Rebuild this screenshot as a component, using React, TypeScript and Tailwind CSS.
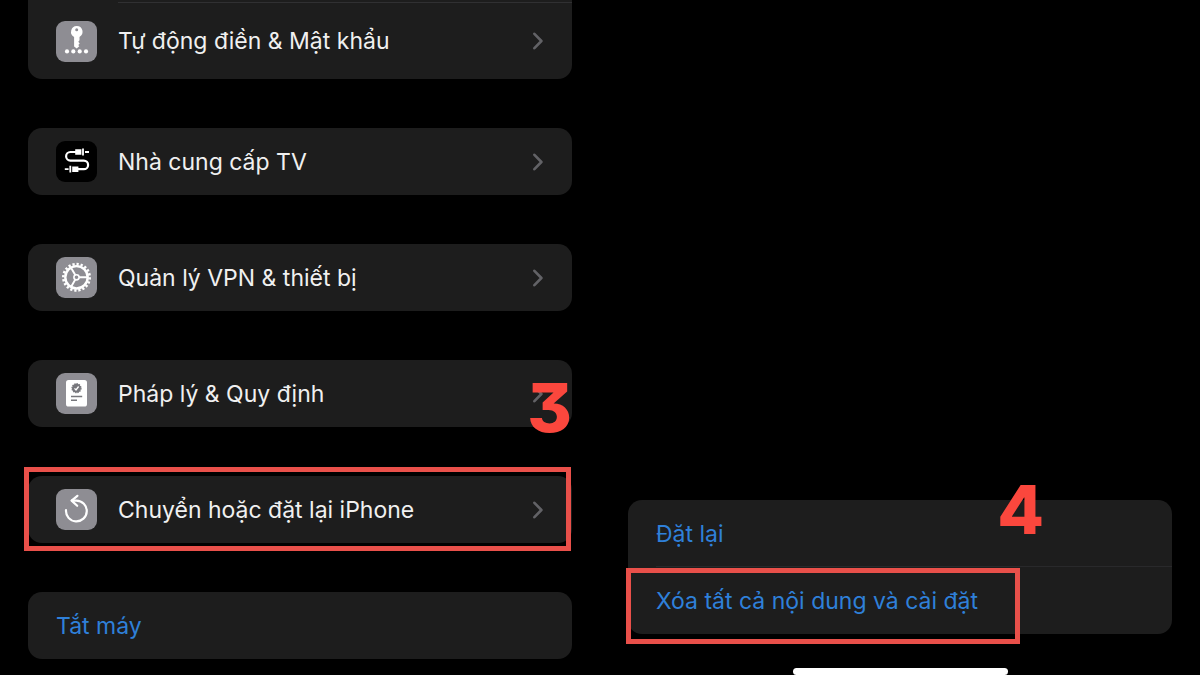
import type { ReactNode } from 'react'

function KeyIcon() {
    return (
        <svg viewBox="0 0 41 41" className="h-full w-full" fill="white" aria-hidden="true">
            <path
                fillRule="evenodd"
                d="M20.7 5a5.8 5.8 0 0 1 2.8 10.9v3.3l-1.2 1.6 1.4 1.6-1.4 1.7 1 1.2-2.6 2.2-2.6-2V15.9A5.8 5.8 0 0 1 20.7 5Zm0 2.3a1.5 1.5 0 1 0 0 3 1.5 1.5 0 0 0 0-3Z"
            />
            <circle cx="11" cy="30.4" r="2.1" />
            <circle cx="17.3" cy="30.4" r="2.1" />
            <circle cx="23.7" cy="30.4" r="2.1" />
            <circle cx="30" cy="30.4" r="2.1" />
        </svg>
    )
}

function CableIcon() {
    return (
        <svg viewBox="0 0 41 41" className="h-full w-full" fill="none" stroke="white" strokeWidth="2.2" aria-hidden="true">
            <path d="M20 11h-5.6a4.3 4.3 0 0 0 0 8.6h13.4a4.3 4.3 0 0 1 0 8.6H22" />
            <path d="M27 7.6v6.8M29 11h4M14.3 24.8v6.8M8.8 28.2h3.8" strokeWidth="1.8" />
            <path d="M19.2 8.2h6.2v5.6h-6.2ZM16.2 25.4h6.2V31h-6.2Z" fill="white" stroke="none" />
        </svg>
    )
}

function GearIcon() {
    return (
        <svg viewBox="0 0 41 41" className="h-full w-full" fill="none" stroke="white" aria-hidden="true">
            <circle cx="20.5" cy="20.3" r="13.2" strokeWidth="2.6" pathLength="40" strokeDasharray="1.1 0.9" />
            <circle cx="20.5" cy="20.3" r="11.2" strokeWidth="2.4" />
            <circle cx="20.5" cy="20.3" r="2.6" strokeWidth="1.6" />
            <path d="M23 20.3h8.5M19.3 18.1 15 10.7M19.3 22.5 15 29.9" strokeWidth="1.9" />
        </svg>
    )
}

function DocumentIcon() {
    return (
        <svg viewBox="0 0 41 41" className="h-full w-full" fill="none" aria-hidden="true">
            <rect x="10" y="7" width="21" height="26.5" rx="2.6" fill="white" />
            <circle cx="20.5" cy="15.2" r="4.4" fill="#77777c" />
            <circle cx="20.5" cy="15.2" r="4.4" stroke="#77777c" strokeWidth="1.4" pathLength="24" strokeDasharray="1.2 0.8" />
            <path d="m18.5 15.4 1.5 1.6 2.6-3.5" stroke="white" strokeWidth="1.3" />
            <path d="M15 23.5h11.2M15 27.3h6" stroke="#77777c" strokeWidth="1.5" />
        </svg>
    )
}

function ResetIcon() {
    return (
        <svg
            viewBox="0 0 41 41"
            className="h-full w-full"
            fill="none"
            stroke="white"
            strokeWidth="2.2"
            strokeLinecap="round"
            strokeLinejoin="round"
            aria-hidden="true"
        >
            <path d="M10 21.2a10.4 10.4 0 1 0 10.4-9.6h-4.6" />
            <path d="m21.4 6.8-5.8 4.8 5.6 5.2" />
        </svg>
    )
}

function Chevron() {
    return (
        <svg
            viewBox="0 0 12 18"
            className="ml-auto h-[18px] w-3 shrink-0"
            fill="none"
            stroke="#626266"
            strokeWidth="2.6"
            strokeLinecap="round"
            strokeLinejoin="round"
            aria-hidden="true"
        >
            <path d="m2.4 1.8 7 7.2-7 7.2" />
        </svg>
    )
}

type RowProps = {
    label: string
    icon: ReactNode
    dark?: boolean
}

function Row({ label, icon, dark }: RowProps) {
    return (
        <a href="#" className="flex h-[67px] items-center gap-[21px] rounded-[14px] bg-[#1d1d1d] px-7">
            <span className={`h-[41px] w-[41px] shrink-0 rounded-[9px] ${dark ? 'bg-black' : 'bg-[#8e8d93]'}`}>
                {icon}
            </span>
            <span className="pt-0.5 text-[23px] leading-[33px] text-[#f0f0f0]">{label}</span>
            <Chevron />
        </a>
    )
}

export default function App() {
    return (
        <main className="flex min-h-screen bg-black font-['Inter','Noto_Sans',sans-serif]">
            <section className="flex flex-1 flex-col gap-[49px] px-7">
                <div className="rounded-b-[14px] bg-[#1d1d1d] pt-0.5">
                    <div className="ml-[90px] h-px bg-[#303032]"></div>
                    <a href="#" className="flex h-[76px] items-center gap-[21px] px-7">
                        <span className="h-[41px] w-[41px] shrink-0 rounded-[9px] bg-[#8e8d93]">
                            <KeyIcon />
                        </span>
                        <span className="text-[23px] leading-[33px] text-[#f0f0f0]">Tự động điền &amp; Mật khẩu</span>
                        <Chevron />
                    </a>
                </div>

                <Row label="Nhà cung cấp TV" icon={<CableIcon />} dark />
                <Row label="Quản lý VPN & thiết bị" icon={<GearIcon />} />

                <div className="relative">
                    <Row label="Pháp lý & Quy định" icon={<DocumentIcon />} />
                    <span className="absolute top-[13px] right-0 text-[68px] leading-[68px] font-extrabold text-[#fb473d] [font-feature-settings:'cv09']">
                        3
                    </span>
                </div>

                <div className="relative">
                    <Row label="Chuyển hoặc đặt lại iPhone" icon={<ResetIcon />} />
                    <div className="pointer-events-none absolute -top-[9px] right-px -bottom-2 -left-1 border-5 border-[#e9504a]"></div>
                </div>

                <button type="button" className="h-[67px] rounded-[14px] bg-[#1d1d1d] px-7 pt-0.5 text-left text-[23px] leading-[33px] text-[#2f80d9]">
                    Tắt máy
                </button>
            </section>

            <section className="flex flex-1 flex-col justify-end px-7">
                <div className="relative mb-[34px] rounded-[14px] bg-[#1d1d1d]">
                    <button type="button" className="block h-[66px] w-full px-7 pt-0.5 text-left text-[23px] leading-[33px] text-[#2f80d9]">
                        Đặt lại
                    </button>
                    <div className="ml-7 h-px bg-[#29292b]"></div>
                    <div className="relative">
                        <button type="button" className="block h-[67px] w-full px-7 pt-0.5 text-left text-[23px] leading-[33px] text-[#2f80d9]">
                            Xóa tất cả nội dung và cài đặt
                        </button>
                        <div className="pointer-events-none absolute top-px right-[152px] -bottom-[10px] -left-0.5 border-5 border-[#e9504a]"></div>
                    </div>
                    <span className="absolute -top-[25px] right-[128px] text-[68px] leading-[68px] font-extrabold text-[#fb473d]">
                        4
                    </span>
                </div>
                <div className="h-[7px] w-[215px] self-center rounded-full bg-white"></div>
            </section>
        </main>
    )
}
